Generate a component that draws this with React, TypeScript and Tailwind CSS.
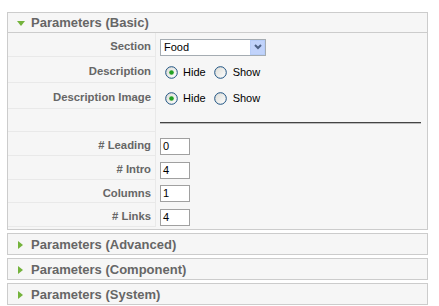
import React from 'react';

const font = { fontFamily: '"Liberation Sans", Arial, sans-serif' };

const DownArrow = () => (
  <svg width="8" height="5" viewBox="0 0 8 5" className="shrink-0">
    <polygon points="0,0 8,0 4,5" fill="#74b33c" />
  </svg>
);

const RightArrow = () => (
  <svg width="5" height="8" viewBox="0 0 5 8" className="shrink-0">
    <polygon points="0,0 5,4 0,8" fill="#74b33c" />
  </svg>
);

const Radio = ({ checked }: { checked?: boolean }) => (
  <svg width="13" height="13" viewBox="0 0 13 13" className="shrink-0">
    <defs>
      <linearGradient id="rg" x1="0" y1="0" x2="1" y2="1">
        <stop offset="0" stopColor="#dcdcd6" />
        <stop offset="1" stopColor="#ffffff" />
      </linearGradient>
    </defs>
    <circle cx="6.5" cy="6.5" r="5.8" fill="url(#rg)" stroke="#1c5180" strokeWidth="1" />
    {checked && <circle cx="6.5" cy="6.5" r="2.3" fill="#21a121" />}
  </svg>
);

const Key = ({ children, h }: { children?: React.ReactNode; h: string }) => (
  <div className={`${h} flex items-center justify-end pt-[4px] pr-[4px] border-b border-r border-[#e9e9e9] text-[11.3px] font-bold text-[#666]`}>
    {children}
  </div>
);

const Val = ({ children, h }: { children?: React.ReactNode; h: string }) => (
  <div className={`${h} flex items-center pt-[4px] pl-[4px] text-[11px] text-black`}>{children}</div>
);

const TextBox = ({ value }: { value: string }) => (
  <div className="w-[30px] h-[17px] bg-white border border-[#a0a0a0] flex items-center pl-[2px] text-[11px] text-black">
    {value}
  </div>
);

const RadioPair = () => (
  <div className="flex items-center ml-[5px] pt-[1px]">
    <Radio checked />
    <span className="ml-[5px] mr-[8px]">Hide</span>
    <Radio />
    <span className="ml-[6px]">Show</span>
  </div>
);

const Collapsed = ({ title }: { title: string }) => (
  <div className="border border-[#ccc] bg-[#f6f6f6] mb-[3px]">
    <div className="h-[20px] flex items-center pt-[1px] pl-[10px]">
      <RightArrow />
      <span className="ml-[8px] text-[13px] font-bold text-[#666]">{title}</span>
    </div>
  </div>
);

export default function App() {
  return (
    <div className="w-[439px] h-[306px] bg-white pt-[12px] pl-[7px] overflow-hidden" style={font}>
      <div className="w-[421px]">
        <div className="border border-[#ccc] bg-[#f6f6f6] mb-[3px]">
          <div className="h-[20px] flex items-center pt-[1px] pl-[9px] border-b border-[#ccc]">
            <DownArrow />
            <span className="ml-[6px] text-[13px] font-bold text-[#666]">Parameters (Basic)</span>
          </div>
          <div className="grid grid-cols-[148px_1fr] pb-[2px]">
            <Key h="h-[24px]">Section</Key>
            <Val h="h-[24px]">
              <div className="w-[106px] h-[17px] bg-white border border-[#a5acb2] flex items-center justify-between">
                <span className="pl-[3px] text-[11px]">Food</span>
                <div className="w-[15px] h-[15px] bg-[#c1d3fb] border border-[#b7cdf8] flex items-center justify-center">
                  <svg width="8" height="6" viewBox="0 0 8 6">
                    <polyline points="1,1 4,4 7,1" fill="none" stroke="#4d6185" strokeWidth="2" />
                  </svg>
                </div>
              </div>
            </Val>
            <Key h="h-[26px]">Description</Key>
            <Val h="h-[26px]">
              <RadioPair />
            </Val>
            <Key h="h-[26px]">Description Image</Key>
            <Val h="h-[26px]">
              <RadioPair />
            </Val>
            <Key h="h-[23px]" />
            <Val h="h-[23px]">
              <div className="w-[261px] border-t border-[#444] border-b border-b-[#bbb]" />
            </Val>
            <Key h="h-[24px]"># Leading</Key>
            <Val h="h-[24px]">
              <TextBox value="0" />
            </Val>
            <Key h="h-[24px]"># Intro</Key>
            <Val h="h-[24px]">
              <TextBox value="4" />
            </Val>
            <Key h="h-[23px]">Columns</Key>
            <Val h="h-[23px]">
              <TextBox value="1" />
            </Val>
            <Key h="h-[24px]"># Links</Key>
            <Val h="h-[24px]">
              <TextBox value="4" />
            </Val>
          </div>
        </div>
        <Collapsed title="Parameters (Advanced)" />
        <Collapsed title="Parameters (Component)" />
        <Collapsed title="Parameters (System)" />
      </div>
    </div>
  );
}
